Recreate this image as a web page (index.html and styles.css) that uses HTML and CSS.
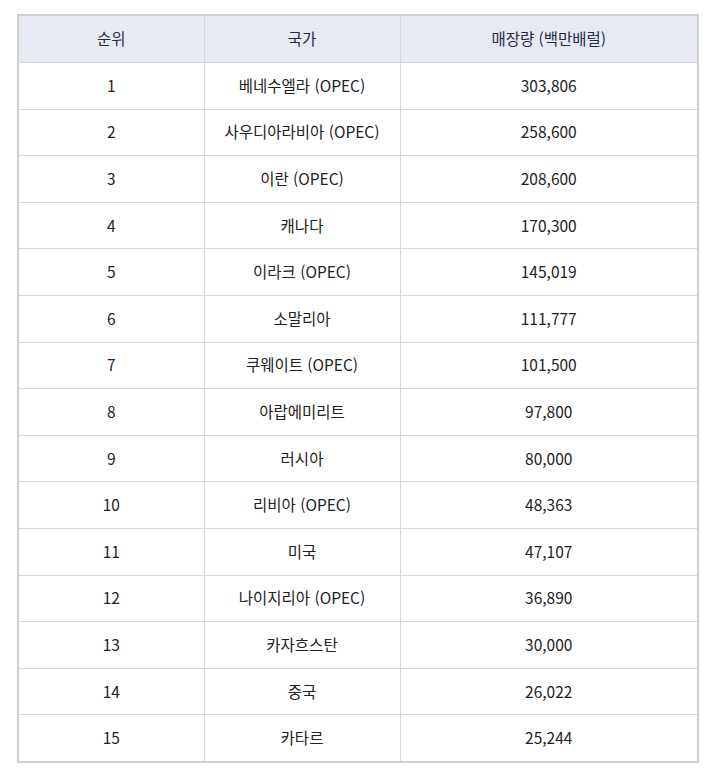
FILE: index.html
```html
<!DOCTYPE html>
<html lang="ko">
<head>
<meta charset="utf-8">
<link rel="stylesheet" href="styles.css">
</head>
<body>
<table class="oil">
  <colgroup>
    <col class="c1"><col class="c2"><col class="c3">
  </colgroup>
  <thead>
    <tr><th>순위</th><th>국가</th><th>매장량 (백만배럴)</th></tr>
  </thead>
  <tbody>
    <tr><td>1</td><td>베네수엘라 (OPEC)</td><td>303,806</td></tr>
    <tr><td>2</td><td>사우디아라비아 (OPEC)</td><td>258,600</td></tr>
    <tr><td>3</td><td>이란 (OPEC)</td><td>208,600</td></tr>
    <tr><td>4</td><td>캐나다</td><td>170,300</td></tr>
    <tr><td>5</td><td>이라크 (OPEC)</td><td>145,019</td></tr>
    <tr><td>6</td><td>소말리아</td><td>111,777</td></tr>
    <tr><td>7</td><td>쿠웨이트 (OPEC)</td><td>101,500</td></tr>
    <tr><td>8</td><td>아랍에미리트</td><td>97,800</td></tr>
    <tr><td>9</td><td>러시아</td><td>80,000</td></tr>
    <tr><td>10</td><td>리비아 (OPEC)</td><td>48,363</td></tr>
    <tr><td>11</td><td>미국</td><td>47,107</td></tr>
    <tr><td>12</td><td>나이지리아 (OPEC)</td><td>36,890</td></tr>
    <tr><td>13</td><td>카자흐스탄</td><td>30,000</td></tr>
    <tr><td>14</td><td>중국</td><td>26,022</td></tr>
    <tr><td>15</td><td>카타르</td><td>25,244</td></tr>
  </tbody>
</table>
</body>
</html>
```
FILE: styles.css
```css
html, body {
  margin: 0;
  padding: 0;
  background: #ffffff;
}
body {
  padding: 14px 8px 0 17px;
  font-family: "Noto Sans CJK KR", "Noto Sans", sans-serif;
  font-size: 15.5px;
  color: #222222;
}
.oil {
  border-collapse: collapse;
  border: 2px solid #cfcfcf;
  width: 680px;
  table-layout: fixed;
}
.c1 { width: 186px; }
.c2 { width: 196px; }
.c3 { width: 298px; }
.oil th,
.oil td {
  border: 1px solid #d6d6d6;
  text-align: center;
  padding: 0 0 2px;
  height: 43.6px;
  line-height: 20px;
  font-weight: 400;
  vertical-align: middle;
}
.oil th {
  background: #e8eaf3;
  color: #1d2b4a;
  height: 44px;
}
```
